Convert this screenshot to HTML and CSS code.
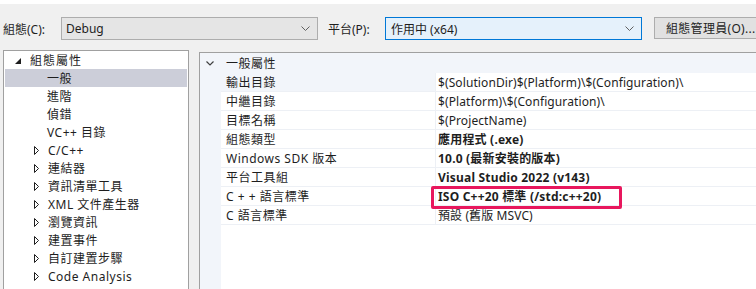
FILE: index.html
```html
<!DOCTYPE html>
<html lang="zh-Hant">
<head>
<meta charset="utf-8">
<link rel="stylesheet" href="styles.css">
</head>
<body>
<div class="strip"></div>
<div class="toolbar">
  <span class="lbl lbl-cfg">組態(C):</span>
  <div class="combo combo-cfg"><span>Debug</span>
    <svg class="chev" width="9" height="6" viewBox="0 0 9 6"><polyline points="0.5,0.5 4.5,4.5 8.5,0.5" fill="none" stroke="#606060" stroke-width="1"/></svg>
  </div>
  <span class="lbl lbl-plat">平台(P):</span>
  <div class="combo combo-plat"><span>作用中 (x64)</span>
    <svg class="chev" width="9" height="6" viewBox="0 0 9 6"><polyline points="0.5,0.5 4.5,4.5 8.5,0.5" fill="none" stroke="#606060" stroke-width="1"/></svg>
  </div>
  <div class="btn">組態管理員(O)...</div>
</div>
<div class="main">
  <div class="tree">
    <div class="node root"><svg class="tri" width="6" height="6" viewBox="0 0 6 6"><polygon points="6,0 6,6 0,6" fill="#1e1e1e"/></svg><span>組態屬性</span></div>
    <div class="node child selected"><span>一般</span></div>
    <div class="node child"><span>進階</span></div>
    <div class="node child"><span>偵錯</span></div>
    <div class="node child"><span>VC++ 目錄</span></div>
    <div class="node child exp"><svg class="tri" width="5" height="9" viewBox="0 0 5 9"><polygon points="0.5,0.5 4.5,4.5 0.5,8.5" fill="none" stroke="#1e1e1e" stroke-width="1"/></svg><span>C/C++</span></div>
    <div class="node child exp"><svg class="tri" width="5" height="9" viewBox="0 0 5 9"><polygon points="0.5,0.5 4.5,4.5 0.5,8.5" fill="none" stroke="#1e1e1e" stroke-width="1"/></svg><span>連結器</span></div>
    <div class="node child exp"><svg class="tri" width="5" height="9" viewBox="0 0 5 9"><polygon points="0.5,0.5 4.5,4.5 0.5,8.5" fill="none" stroke="#1e1e1e" stroke-width="1"/></svg><span>資訊清單工具</span></div>
    <div class="node child exp"><svg class="tri" width="5" height="9" viewBox="0 0 5 9"><polygon points="0.5,0.5 4.5,4.5 0.5,8.5" fill="none" stroke="#1e1e1e" stroke-width="1"/></svg><span>XML 文件產生器</span></div>
    <div class="node child exp"><svg class="tri" width="5" height="9" viewBox="0 0 5 9"><polygon points="0.5,0.5 4.5,4.5 0.5,8.5" fill="none" stroke="#1e1e1e" stroke-width="1"/></svg><span>瀏覽資訊</span></div>
    <div class="node child exp"><svg class="tri" width="5" height="9" viewBox="0 0 5 9"><polygon points="0.5,0.5 4.5,4.5 0.5,8.5" fill="none" stroke="#1e1e1e" stroke-width="1"/></svg><span>建置事件</span></div>
    <div class="node child exp"><svg class="tri" width="5" height="9" viewBox="0 0 5 9"><polygon points="0.5,0.5 4.5,4.5 0.5,8.5" fill="none" stroke="#1e1e1e" stroke-width="1"/></svg><span>自訂建置步驟</span></div>
    <div class="node child exp"><svg class="tri" width="5" height="9" viewBox="0 0 5 9"><polygon points="0.5,0.5 4.5,4.5 0.5,8.5" fill="none" stroke="#1e1e1e" stroke-width="1"/></svg><span>Code Analysis</span></div>
  </div>
  <div class="grid">
    <div class="gutter">
      <svg class="cat-chev" width="8" height="5" viewBox="0 0 8 5"><polyline points="0.5,0.5 4,4 7.5,0.5" fill="none" stroke="#404040" stroke-width="1.2"/></svg>
    </div>
    <div class="props">
      <div class="cat">一般屬性</div>
      <div class="row"><div class="k first">輸出目錄</div><div class="v">$(SolutionDir)$(Platform)\$(Configuration)\</div></div>
      <div class="row"><div class="k">中繼目錄</div><div class="v">$(Platform)\$(Configuration)\</div></div>
      <div class="row"><div class="k">目標名稱</div><div class="v">$(ProjectName)</div></div>
      <div class="row"><div class="k">組態類型</div><div class="v b">應用程式 (.exe)</div></div>
      <div class="row"><div class="k">Windows SDK 版本</div><div class="v b">10.0 (最新安裝的版本)</div></div>
      <div class="row"><div class="k">平台工具組</div><div class="v b">Visual Studio 2022 (v143)</div></div>
      <div class="row"><div class="k">C + + 語言標準</div><div class="v b mark">ISO C++20 標準 (/std:c++20)</div></div>
      <div class="row"><div class="k">C 語言標準</div><div class="v">預設 (舊版 MSVC)</div></div>
    </div>
  </div>
</div>
</body>
</html>
```
FILE: styles.css
```css
html, body {
  margin: 0;
  padding: 0;
}
body {
  width: 756px;
  height: 289px;
  overflow: hidden;
  background: #f0f0f0;
  font-family: "Noto Sans", "Noto Sans CJK TC", sans-serif;
  font-size: 12px;
  color: #1e1e1e;
}
.strip {
  height: 4px;
  background: #ffffff;
}
.toolbar {
  display: flex;
  align-items: flex-start;
  height: 46px;
  padding-top: 13px;
  box-sizing: border-box;
  overflow: hidden;
}
.toolbar > * {
  flex: none;
}
.lbl {
  white-space: nowrap;
  height: 23px;
  display: flex;
  align-items: center;
}
.lbl-cfg {
  margin-left: 3px;
  width: 58px;
}
.combo {
  box-sizing: border-box;
  height: 23px;
  border: 1px solid #adadad;
  background: #e5e5e5;
  display: flex;
  align-items: center;
  justify-content: space-between;
  padding: 0 7px 0 4px;
}
.combo-cfg {
  width: 257px;
}
.combo-plat {
  width: 257px;
  border-color: #0078d7;
  background: #e5f1fb;
  padding-left: 5px;
}
.lbl-plat {
  margin-left: 10px;
  width: 57px;
}
.chev {
  display: block;
}
.btn {
  box-sizing: border-box;
  height: 22px;
  margin-left: 12px;
  width: 120px;
  border: 1px solid #adadad;
  background: #e1e1e1;
  padding-left: 11px;
  display: flex;
  align-items: center;
  white-space: nowrap;
  letter-spacing: 0.3px;
}
.main {
  display: flex;
  align-items: flex-start;
  height: 239px;
  overflow: hidden;
}
.tree {
  margin-left: 3px;
  width: 186px;
  height: 239px;
  flex: none;
  box-sizing: border-box;
  border: 1px solid #a0a0a0;
  border-bottom: none;
  background: #ffffff;
  padding: 0 1px;
}
.node {
  height: 18px;
  display: flex;
  align-items: center;
  white-space: nowrap;
  position: relative;
}
.root {
  padding-left: 10px;
  letter-spacing: 1px;
}
.root .tri {
  margin-right: 9px;
  margin-top: 2px;
}
.child {
  padding-left: 42px;
  letter-spacing: 0.5px;
}
.child.exp {
  padding-left: 29px;
}
.child.exp .tri {
  margin-right: 9px;
}
.selected {
  background: #ccced9;
}
.grid {
  margin-top: 2px;
  margin-left: 10px;
  flex: 1;
  height: 237px;
  display: flex;
  border-top: 1px solid #a0a0a0;
  border-left: 1px solid #a0a0a0;
  background: #ffffff;
}
.gutter {
  width: 21px;
  background: #f2f5fa;
  flex: none;
  padding-top: 8px;
  box-sizing: border-box;
}
.cat-chev {
  display: block;
  margin-left: 6px;
}
.props {
  flex: 1;
}
.cat {
  height: 20px;
  display: flex;
  align-items: center;
  padding-left: 5px;
  background: #f2f5fa;
  letter-spacing: 0.5px;
}
.row {
  display: flex;
  height: 19px;
  box-sizing: border-box;
  border-bottom: 1px solid #edf0f5;
}
.k {
  width: 215px;
  flex: none;
  box-sizing: border-box;
  padding-left: 5px;
  border-right: 1px solid #edf0f5;
  display: flex;
  align-items: center;
  white-space: nowrap;
  letter-spacing: 0.5px;
}
.k.first {
  background: #f2f5fa;
}
.v {
  padding-left: 2px;
  display: flex;
  align-items: center;
  white-space: nowrap;
  position: relative;
  letter-spacing: 0.1px;
}
.v.b {
  font-weight: bold;
  letter-spacing: 0.2px;
}
.mark::after {
  content: "";
  position: absolute;
  left: -5px;
  top: -1px;
  width: 191px;
  height: 23px;
  box-sizing: border-box;
  border: 3px solid #e8175d;
  border-radius: 2px;
}
```
